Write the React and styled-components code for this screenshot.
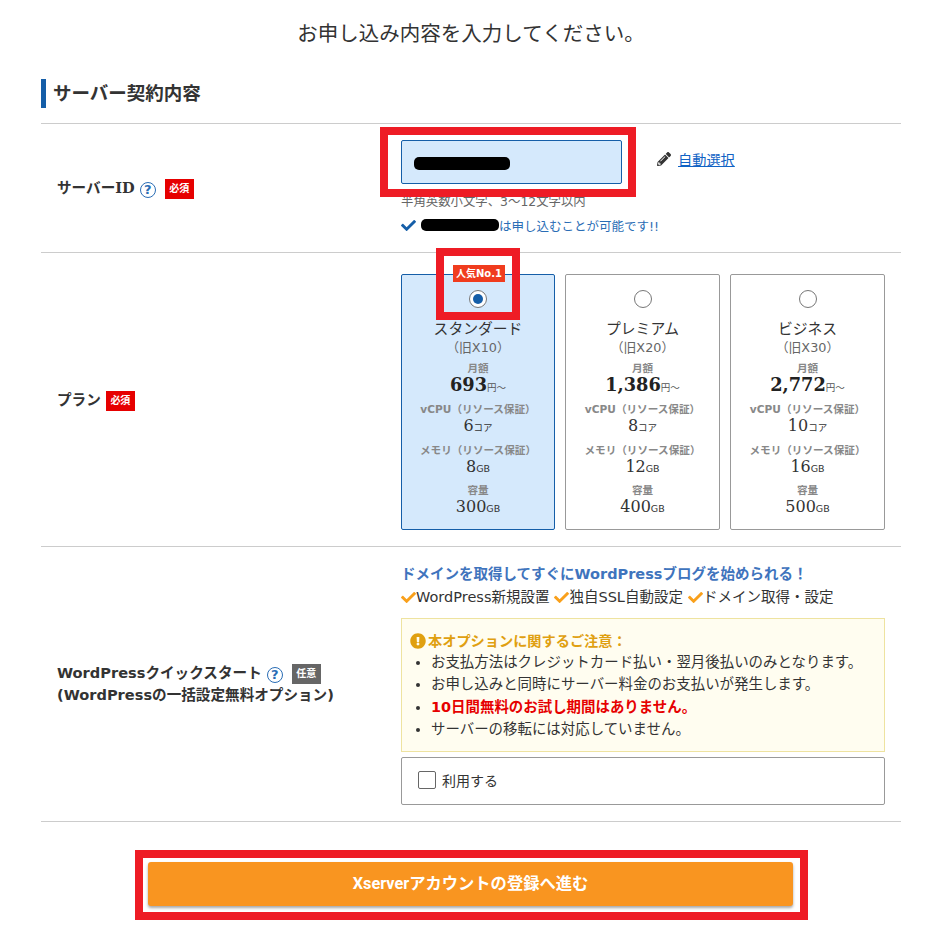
import React from 'react';
import styled, { createGlobalStyle } from 'styled-components';
import { FaCheck, FaPencilAlt, FaExclamationCircle } from 'react-icons/fa';

const GlobalStyle = createGlobalStyle`
  body {
    margin: 0;
    background: #fff;
    color: #333;
    font-family: "DejaVu Sans", "Noto Sans CJK JP", sans-serif;
  }
`

const Page = styled.div`
  width: 935px;
  height: 931px;
  padding: 0 34px 0 41px;
  box-sizing: border-box;
  overflow: hidden;
`
const Lead = styled.h1`
  margin: 0;
  padding-top: 20px;
  height: 79px;
  box-sizing: border-box;
  font-size: 20.5px;
  line-height: 28px;
  font-weight: 400;
  text-align: center;
  color: #333;
`
const SectionTitle = styled.h2`
  margin: 0 0 15px;
  height: 29px;
  border-left: 5px solid #155ea8;
  padding-left: 7px;
  font-size: 18.5px;
  line-height: 29px;
  font-weight: 700;
  color: #333;
`
const Row = styled.div`
  display: grid;
  grid-template-columns: 360px 484px;
  border-top: 1px solid #ccc;
  height: ${p => p.$height}px;
  box-sizing: border-box;
`
const Label = styled.div`
  align-self: center;
  padding-left: 16px;
  font-size: 14.6px;
  line-height: 21.5px;
  font-weight: 700;
  color: #333;
`
const Serif = styled.span`
  font-family: "DejaVu Serif", "Noto Sans CJK JP", serif;
`
const Help = styled.span`
  display: inline-block;
  width: 14px;
  height: 14px;
  margin: 0 9px 0 5px;
  border: 1px solid #2a6db5;
  border-radius: 50%;
  color: #2a6db5;
  font-size: 13px;
  font-weight: 700;
  line-height: 14px;
  text-align: center;
  vertical-align: -1px;
`
const Tag = styled.span`
  display: inline-block;
  width: 29px;
  height: 20px;
  background: ${p => (p.$optional ? '#666' : '#e60000')};
  color: #fff;
  font-size: 10px;
  line-height: 20px;
  font-weight: 700;
  text-align: center;
  vertical-align: 1px;
`
const Cell = styled.div`
  padding-top: ${p => p.$top}px;
`
const IdLine = styled.div`
  display: flex;
  align-items: flex-start;
`
const InputWrap = styled.div`
  position: relative;
  width: 221px;
  height: 44px;
  margin-bottom: 9px;
`
const IdInput = styled.div`
  height: 100%;
  box-sizing: border-box;
  background: #d5e9fc;
  border: 1px solid #155ea8;
  border-radius: 2px;
  padding: 14px 0 0 12px;
`
const Blob = styled.span`
  display: inline-block;
  width: ${p => p.$w}px;
  height: ${p => p.$h}px;
  background: #000;
  border-radius: 5px;
`
const RedFrame = styled.div`
  position: absolute;
  border: 8px solid #ee1c25;
  top: ${p => p.$top}px;
  left: ${p => p.$left}px;
  right: ${p => p.$right}px;
  bottom: ${p => p.$bottom}px;
`
const AutoPick = styled.div`
  display: flex;
  align-items: center;
  gap: 7px;
  margin: 8px 0 0 35px;
  height: 22px;
  color: #333;
  font-size: 14.2px;
`
const LinkText = styled.a`
  color: #0f62c4;
  text-decoration: underline;
`
const Hint = styled.div`
  font-size: 12.4px;
  line-height: 17px;
  color: #666;
`
const Ok = styled.div`
  display: flex;
  align-items: center;
  margin-top: 6px;
  height: 18px;
  font-size: 12.5px;
  color: #2a6db5;
  svg { color: #155ea8; margin-right: 5px; }
`
const Plans = styled.div`
  display: grid;
  grid-template-columns: 154px 155px 155px;
  gap: 10px;
`
const Card = styled.div`
  position: relative;
  height: 256px;
  box-sizing: border-box;
  padding-top: 15px;
  border: 1px solid ${p => (p.$active ? '#155ea8' : '#999')};
  border-radius: 2px;
  background: ${p => (p.$active ? '#d5e9fc' : '#fff')};
  text-align: center;
`
const Badge = styled.span`
  position: absolute;
  top: -10px;
  left: 51px;
  width: 52px;
  height: 17px;
  background: #f03c1e;
  color: #fff;
  font-size: 10px;
  line-height: 17px;
  font-weight: 700;
`
const Radio = styled.span`
  display: block;
  width: 16px;
  height: 16px;
  margin: 0 auto;
  border: 1px solid #777;
  border-radius: 50%;
  background: #fff;
  position: relative;
  &::after {
    content: "";
    display: ${p => (p.$on ? 'block' : 'none')};
    position: absolute;
    inset: 3px;
    border-radius: 50%;
    background: #155ea8;
  }
`
const PlanName = styled.div`
  margin-top: 11px;
  font-size: 14.8px;
  line-height: 20px;
  color: #333;
`
const OldName = styled.div`
  font-size: 12.8px;
  line-height: 18px;
  color: #666;
  margin-bottom: 4px;
`
const SpecLabel = styled.div`
  font-size: 10.6px;
  line-height: 14px;
  font-weight: 700;
  color: #888;
  margin-top: ${p => p.$gap || 0}px;
`
const SpecValue = styled.div`
  height: 20px;
  font-family: "DejaVu Serif", "Noto Sans CJK JP", serif;
  font-size: 16px;
  line-height: 19px;
  color: #333;
  small {
    font-family: "DejaVu Sans", "Noto Sans CJK JP", sans-serif;
    font-size: 9.5px;
    line-height: 1;
  }
`
const Price = styled(SpecValue)`
  font-size: 17.8px;
  font-weight: 700;
  line-height: 20px;
  color: #222;
  small { font-weight: 400; color: #555; }
`
const Catch = styled.div`
  font-size: 14.5px;
  line-height: 20px;
  font-weight: 700;
  color: #3f74bd;
`
const Features = styled.div`
  display: flex;
  gap: 5px;
  margin: 3px 0 11px;
  font-size: 14.5px;
  line-height: 20px;
  color: #333;
`
const Feature = styled.span`
  display: flex;
  align-items: center;
  svg { color: #f9a01b; }
`
const Notice = styled.div`
  height: 134px;
  box-sizing: border-box;
  padding: 12px 8px 0;
  background: #fffdf0;
  border: 1px solid #eee3a0;
`
const NoticeTitle = styled.div`
  display: flex;
  align-items: center;
  gap: 2px;
  font-size: 14.2px;
  line-height: 20px;
  font-weight: 700;
  color: #e0a010;
`
const NoticeList = styled.ul`
  margin: 0;
  padding: 0 0 0 21px;
  font-size: 14.45px;
  line-height: 22.3px;
  color: #333;
`
const Warn = styled.li`
  color: #e60000;
  font-weight: 700;
  &::marker { color: #333; }
`
const UseBox = styled.label`
  display: flex;
  align-items: center;
  gap: 6px;
  height: 48px;
  margin-top: 5px;
  padding: 0 0 2px 16px;
  box-sizing: border-box;
  border: 1px solid #999;
  border-radius: 2px;
  font-size: 14px;
  color: #333;
`
const Box = styled.span`
  width: 16px;
  height: 16px;
  border: 1px solid #666;
  border-radius: 2px;
  background: #fff;
`
const Footer = styled.div`
  border-top: 1px solid #ccc;
  padding: 40px 0 0 107px;
`
const NextWrap = styled.div`
  position: relative;
  width: 645px;
  height: 44px;
`
const NextButton = styled.button`
  display: block;
  width: 100%;
  height: 100%;
  padding: 0 0 4px;
  border: 0;
  border-radius: 3px;
  background: #f99520;
  box-shadow: 0 2px 3px rgba(0, 0, 0, 0.35);
  color: #fff;
  font-family: Roboto, "Noto Sans CJK JP", sans-serif;
  font-size: 16.3px;
  font-weight: 700;
`

const plans = [
  { name: 'スタンダード', old: '旧X10', price: '693', cpu: '6', mem: '8', disk: '300', active: true },
  { name: 'プレミアム', old: '旧X20', price: '1,386', cpu: '8', mem: '12', disk: '400' },
  { name: 'ビジネス', old: '旧X30', price: '2,772', cpu: '10', mem: '16', disk: '500' },
];

function Plan({ plan }) {
  return (
    <Card $active={plan.active}>
      {plan.active && <Badge>人気No.1</Badge>}
      <Radio $on={plan.active} />
      {plan.active && <RedFrame $top={-27} $left={34} $right={34} $bottom={209} />}
      <PlanName>{plan.name}</PlanName>
      <OldName>（{plan.old}）</OldName>
      <SpecLabel>月額</SpecLabel>
      <Price>{plan.price}<small>円～</small></Price>
      <SpecLabel $gap={7}>vCPU（リソース保証）</SpecLabel>
      <SpecValue>{plan.cpu}<small>コア</small></SpecValue>
      <SpecLabel $gap={7}>メモリ（リソース保証）</SpecLabel>
      <SpecValue>{plan.mem}<small>GB</small></SpecValue>
      <SpecLabel $gap={6}>容量</SpecLabel>
      <SpecValue>{plan.disk}<small>GB</small></SpecValue>
    </Card>
  );
}

export default function App() {
  return (
    <Page>
      <GlobalStyle />
      <Lead>お申し込み内容を入力してください。</Lead>
      <SectionTitle>サーバー契約内容</SectionTitle>

      <Row $height={129}>
        <Label>サーバー<Serif>ID</Serif><Help>?</Help><Tag>必須</Tag></Label>
        <Cell $top={16}>
          <IdLine>
            <InputWrap>
              <IdInput><Blob $w={96} $h={13} /></IdInput>
              <RedFrame $top={-13} $left={-21} $right={-14} $bottom={-13} />
            </InputWrap>
            <AutoPick><FaPencilAlt size={14} /><LinkText href="#">自動選択</LinkText></AutoPick>
          </IdLine>
          <Hint>半角英数小文字、3～12文字以内</Hint>
          <Ok><FaCheck size={15} /><Blob $w={78} $h={12} />は申し込むことが可能です!!</Ok>
        </Cell>
      </Row>

      <Row $height={294}>
        <Label>プラン <Tag>必須</Tag></Label>
        <Cell $top={21}>
          <Plans>{plans.map(p => <Plan key={p.name} plan={p} />)}</Plans>
        </Cell>
      </Row>

      <Row $height={275}>
        <Label>
          WordPressクイックスタート<Help>?</Help><Tag $optional>任意</Tag><br />
          (WordPressの一括設定無料オプション)
        </Label>
        <Cell $top={17}>
          <Catch>ドメインを取得してすぐにWordPressブログを始められる！</Catch>
          <Features>
            <Feature><FaCheck size={15} />WordPress新規設置</Feature>
            <Feature><FaCheck size={15} />独自SSL自動設定</Feature>
            <Feature><FaCheck size={15} />ドメイン取得・設定</Feature>
          </Features>
          <Notice>
            <NoticeTitle><FaExclamationCircle size={16} />本オプションに関するご注意：</NoticeTitle>
            <NoticeList>
              <li>お支払方法はクレジットカード払い・翌月後払いのみとなります。</li>
              <li>お申し込みと同時にサーバー料金のお支払いが発生します。</li>
              <Warn>10日間無料のお試し期間はありません。</Warn>
              <li>サーバーの移転には対応していません。</li>
            </NoticeList>
          </Notice>
          <UseBox><Box />利用する</UseBox>
        </Cell>
      </Row>

      <Footer>
        <NextWrap>
          <NextButton>Xserverアカウントの登録へ進む</NextButton>
          <RedFrame $top={-12} $left={-13} $right={-15} $bottom={-14} />
        </NextWrap>
      </Footer>
    </Page>
  );
}
